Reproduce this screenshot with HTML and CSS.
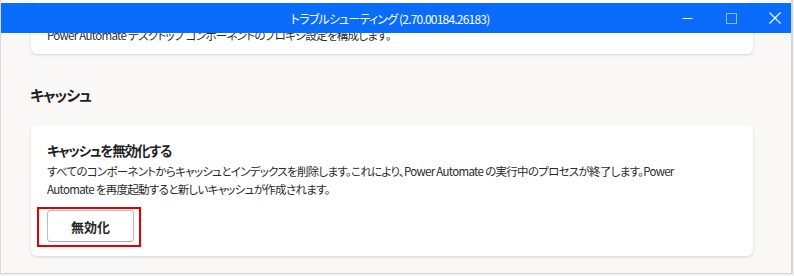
FILE: index.html
```html
<!DOCTYPE html>
<html lang="ja">
<head>
<meta charset="utf-8">
<link rel="stylesheet" href="styles.css">
</head>
<body>
<div class="window">
  <div class="content">
    <div class="card card-top">
      <p class="desc top-desc">Power Automate デスクトップ コンポーネントのプロキシ設定を構成します。</p>
      <span class="btn-ghost"></span>
    </div>
    <h2 class="section-title">キャッシュ</h2>
    <div class="card card-cache">
      <h3 class="card-title">キャッシュを無効化する</h3>
      <p class="desc"><span class="line">すべてのコンポーネントからキャッシュとインデックスを削除します。これにより、Power Automate の実行中のプロセスが終了します。Power</span><span class="line">Automate を再度起動すると新しいキャッシュが作成されます。</span></p>
      <div class="btn-wrap">
        <button class="btn">無効化</button>
        <span class="highlight"></span>
      </div>
    </div>
  </div>
  <div class="titlebar">
    <span class="title">トラブルシューティング (2.70.00184.26183)</span>
    <div class="controls">
      <span class="ctl min"><svg width="11" height="11" viewBox="0 0 11 11"><path d="M0.5 5.5h10" stroke="#fff" stroke-width="1"/></svg></span>
      <span class="ctl max"><svg width="11" height="11" viewBox="0 0 11 11"><rect x="0.5" y="0.5" width="10" height="10" fill="none" stroke="#fff" stroke-width="1"/></svg></span>
      <span class="ctl close"><svg width="12" height="12" viewBox="0 0 12 12"><path d="M0.5 0.5l11 11M11.5 0.5l-11 11" stroke="#fff" stroke-width="1.2"/></svg></span>
    </div>
  </div>
</div>
</body>
</html>
```
FILE: styles.css
```css
* { box-sizing: border-box; }
html, body { margin: 0; padding: 0; }
body {
  width: 794px;
  height: 276px;
  overflow: hidden;
  background: #f3f3f3;
  font-family: "Noto Sans CJK JP", "Noto Sans", sans-serif;
  font-feature-settings: "palt";
  color: #1f1f1f;
}
.window {
  position: relative;
  width: 793px;
  height: 274px;
  background: #f9f8f6;
  border-left: 1px solid #d8d8d8;
  border-right: 2px solid #d6d6d6;
  border-bottom: 1px solid #d6d6d6;
  overflow: hidden;
}
.content {
  padding: 0 38px 0 29px;
  display: flex;
  flex-direction: column;
}
.card {
  background: #fff;
  border-radius: 6px;
  box-shadow: 0 1px 3px rgba(0,0,0,0.14);
  margin-left: 1px;
}
.card-top {
  height: 54px;
  display: flex;
  align-items: flex-start;
  justify-content: space-between;
  padding: 24px 17px 0 16px;
}
.top-desc { margin: 0; }
.btn-ghost {
  display: block;
  width: 79px;
  height: 10px;
  margin-top: -1px;
  border: 1px solid #c8c8c8;
  border-top: none;
  border-radius: 0 0 4px 4px;
}
.section-title {
  margin: 30px 0 0 0;
  font-size: 15px;
  font-weight: 600;
  line-height: 22px;
  letter-spacing: -1px;
}
.card-cache {
  margin-top: 19px;
  height: 131px;
  padding: 15px 16px 0 16px;
}
.card-title {
  margin: 0;
  font-size: 13.5px;
  font-weight: 600;
  line-height: 20px;
  letter-spacing: -1.2px;
}
.desc {
  margin: 2px 0 0 0;
  font-size: 11.5px;
  line-height: 18px;
  letter-spacing: -0.7px;
  color: #2a2a2a;
  white-space: nowrap;
}
.line { display: block; }
.btn-wrap {
  position: relative;
  margin-top: 12px;
  width: 87px;
}
.btn {
  display: block;
  width: 87px;
  height: 32px;
  background: #fff;
  border: 1px solid #bdbdbd;
  border-bottom-color: #a8a8a8;
  border-radius: 4px;
  font-family: inherit;
  font-feature-settings: "palt";
  font-size: 13px;
  font-weight: 700;
  color: #262626;
  padding: 0;
}
.highlight {
  position: absolute;
  left: -10px;
  top: -3px;
  width: 104px;
  height: 40px;
  border: 2px solid #e00000;
  pointer-events: none;
}
.titlebar {
  position: absolute;
  left: 0;
  top: 3px;
  width: 790px;
  height: 30px;
  background: #0a6cfc;
  display: flex;
  align-items: center;
  justify-content: center;
}
.title {
  color: #fff;
  font-size: 12px;
  letter-spacing: -0.8px;
  margin-left: -12px;
}
.controls {
  position: absolute;
  right: -6px;
  top: 0;
  height: 30px;
  display: flex;
  align-items: center;
}
.ctl {
  display: flex;
  align-items: center;
  justify-content: center;
  width: 44px;
  height: 30px;
}
.max { opacity: 0.55; }
```
